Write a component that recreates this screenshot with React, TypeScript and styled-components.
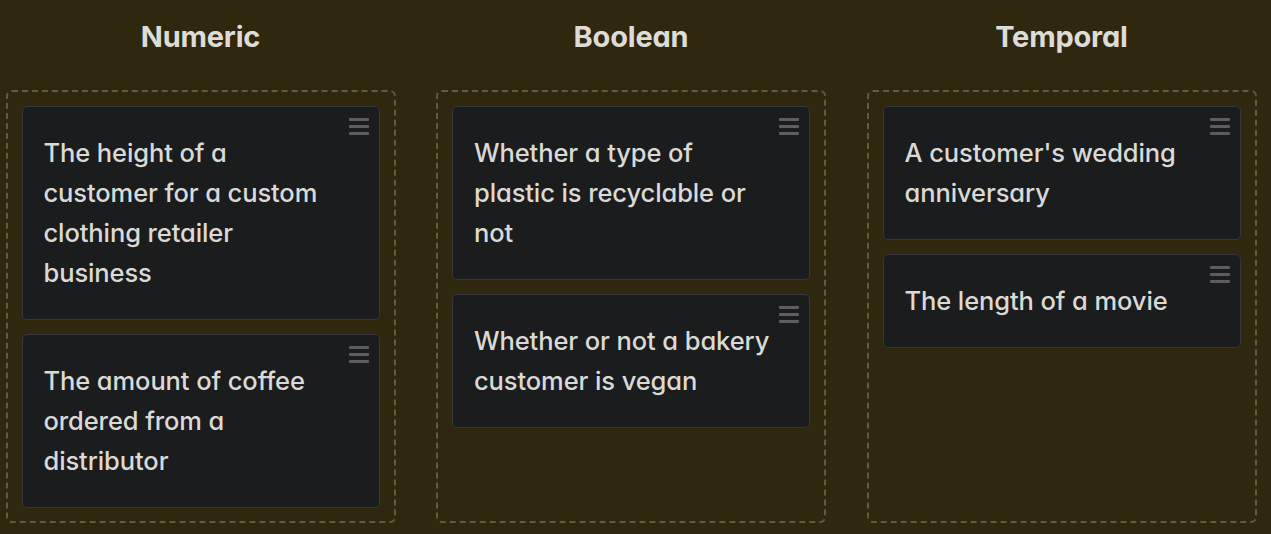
import React from "react";
import styled, { createGlobalStyle } from "styled-components";

const Global = createGlobalStyle`
  html, body { margin: 0; padding: 0; background: #30270f; }
  body { font-family: Inter, "Noto Sans", sans-serif; font-feature-settings: "cv11" 1; }
`;

const Board = styled.div`
  display: grid;
  grid-template-columns: repeat(3, 390px);
  column-gap: 40.5px;
  padding: 0 0 0 5.5px;
  height: 534px;
  box-sizing: border-box;
`;

const Column = styled.section`
  display: flex;
  flex-direction: column;
`;

const Heading = styled.h2`
  margin: 0;
  height: 90px;
  display: flex;
  align-items: center;
  justify-content: center;
  padding-bottom: 17px;
  box-sizing: border-box;
  font-size: 29px;
  font-weight: 700;
  color: #dedcd6;
  letter-spacing: -0.2px;
`;

const Zone = styled.div`
  height: 433px;
  box-sizing: border-box;
  border: 2px dashed #645a3c;
  border-radius: 6px;
  padding: 14px 14px;
  display: flex;
  flex-direction: column;
  gap: 14px;
`;

const Card = styled.div`
  position: relative;
  background: #1b1c1e;
  border: 1px solid #36363a;
  border-radius: 5px;
  padding: 26px 30px 26px 21px;
  color: #dad9d6;
  font-size: 25.5px;
  line-height: 40px;
  font-weight: 500;
  letter-spacing: -0.1px;
`;

const Line = styled.span`
  display: block;
  white-space: nowrap;
`;

const Handle = styled.span`
  position: absolute;
  top: 11px;
  right: 10px;
  width: 20px;
  height: 17px;
  display: flex;
  flex-direction: column;
  justify-content: space-between;
  & > i {
    display: block;
    height: 3px;
    background: #5e5e60;
    border-radius: 1px;
  }
`;

const columns = [
  {
    title: "Numeric",
    items: [
      ["The height of a", "customer for a custom", "clothing retailer", "business"],
      ["The amount of coffee", "ordered from a", "distributor"],
    ],
  },
  {
    title: "Boolean",
    items: [
      ["Whether a type of", "plastic is recyclable or", "not"],
      ["Whether or not a bakery", "customer is vegan"],
    ],
  },
  {
    title: "Temporal",
    items: [["A customer's wedding", "anniversary"], ["The length of a movie"]],
  },
];

export default function App() {
  return (
    <>
      <Global />
      <Board>
        {columns.map((c) => (
          <Column key={c.title}>
            <Heading>{c.title}</Heading>
            <Zone>
              {c.items.map((lines) => (
                <Card key={lines[0]}>
                  <Handle>
                    <i />
                    <i />
                    <i />
                  </Handle>
                  {lines.map((l, i) => (
                    <Line key={i}>{l}{i < lines.length - 1 ? " " : ""}</Line>
                  ))}
                </Card>
              ))}
            </Zone>
          </Column>
        ))}
      </Board>
    </>
  );
}
